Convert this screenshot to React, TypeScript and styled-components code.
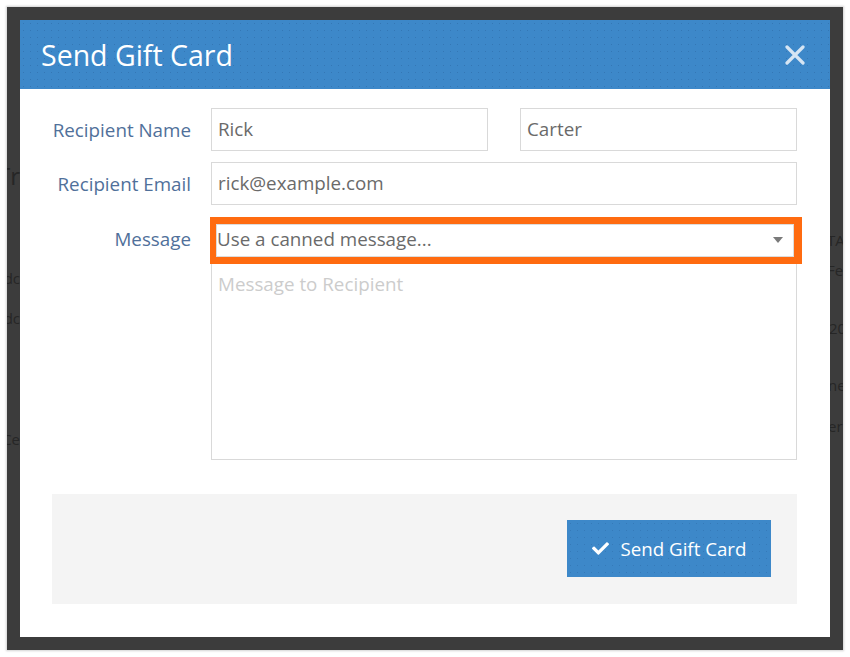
import React from "react";
import styled, { createGlobalStyle } from "styled-components";
import { FaCheck } from "react-icons/fa";

const Global = createGlobalStyle`
  html, body { margin: 0; padding: 0; background: #ffffff; }
  body { width: 850px; height: 657px; overflow: hidden; font-family: "Open Sans", "Liberation Sans", sans-serif; }
  * { box-sizing: border-box; }
`;

const Frame = styled.div`
  margin: 7px;
  width: 836px;
  height: 643px;
  background: #3c3c3c;
  box-shadow: 0 0 2px 1px rgba(0, 0, 0, 0.18);
  display: grid;
  grid-template-columns: 13px 810px 13px;
  grid-template-rows: 13px 617px 13px;
`;

const Gutter = styled.div<{ $col: number; $align: "left" | "right" }>`
  grid-column: ${(p) => p.$col};
  grid-row: 2;
  overflow: hidden;
  display: flex;
  flex-direction: column;
  align-items: ${(p) => (p.$align === "right" ? "flex-end" : "flex-start")};
  white-space: nowrap;
`;

const Ghost = styled.div<{ $mt: number; $size: number; $shift: number }>`
  margin-top: ${(p) => p.$mt}px;
  font-size: ${(p) => p.$size}px;
  line-height: ${(p) => p.$size + 2}px;
  color: #262626;
  margin-left: ${(p) => p.$shift}px;
  margin-right: ${(p) => -p.$shift}px;
`;

const Modal = styled.div`
  grid-column: 2;
  grid-row: 2;
  background: #ffffff;
  display: flex;
  flex-direction: column;
`;

const Header = styled.div`
  height: 69px;
  background-color: #3d88c9;
  background-image: radial-gradient(rgba(20, 60, 110, 0.22) 0.6px, transparent 0.9px);
  background-size: 7px 7px;
  display: flex;
  align-items: center;
  justify-content: space-between;
  padding: 0 24px 0 21px;
`;

const Title = styled.h1`
  margin: 0;
  font-size: 28.5px;
  font-weight: 400;
  color: #ffffff;
`;

const Close = styled.button`
  border: 0;
  background: transparent;
  padding: 0;
  width: 22px;
  height: 22px;
  display: flex;
  align-items: center;
  justify-content: center;
  cursor: pointer;
`;

const Body = styled.div`
  padding: 19px 33px 0 32px;
  display: flex;
  flex-direction: column;
`;

const Row = styled.div<{ $mb: number }>`
  display: grid;
  grid-template-columns: 139px 1fr;
  column-gap: 20px;
  margin-bottom: ${(p) => p.$mb}px;
`;

const Label = styled.label`
  text-align: right;
  font-size: 18.8px;
  color: #50709a;
  line-height: 43px;
  height: 43px;
  padding-top: 1px;
  white-space: nowrap;
`;

const Pair = styled.div`
  display: grid;
  grid-template-columns: 277px 277px;
  justify-content: space-between;
`;

const Input = styled.div`
  height: 43px;
  border: 1px solid #d9d9d9;
  padding: 0 6px;
  font-size: 18.8px;
  line-height: 41px;
  color: #6a6a6a;
`;

const Stack = styled.div`
  display: flex;
  flex-direction: column;
`;

const Select = styled.div`
  height: 47px;
  width: calc(100% + 6px);
  margin-left: -1px;
  border-style: solid;
  border-color: #ff6b10;
  border-width: 7px 8px 7px 6px;
  box-shadow: inset 0 0 0 1px #dcdcdc;
  display: flex;
  align-items: center;
  justify-content: space-between;
  padding: 0 11px 3px 1px;
  font-size: 18.8px;
  color: #6a6a6a;
`;

const Caret = styled.span`
  width: 0;
  height: 0;
  margin-top: 1px;
  border-left: 5px solid transparent;
  border-right: 5px solid transparent;
  border-top: 6px solid #7a7a7a;
`;

const TextArea = styled.div`
  height: 196px;
  border: 1px solid #d9d9d9;
  border-top: 0;
  padding: 7px 6px;
  font-size: 18.8px;
  color: #cccccc;
`;

const Footer = styled.div`
  margin-top: 34px;
  height: 110px;
  background: #f4f4f4;
  display: flex;
  justify-content: flex-end;
  align-items: flex-start;
  padding: 26px 26px 0 0;
`;

const Button = styled.button`
  width: 204px;
  height: 57px;
  border: 0;
  background-color: #3d88c9;
  background-image: radial-gradient(rgba(20, 60, 110, 0.18) 0.6px, transparent 0.9px);
  background-size: 7px 7px;
  color: #ffffff;
  font-family: "Open Sans", "Liberation Sans", sans-serif;
  font-size: 18.7px;
  display: flex;
  align-items: center;
  justify-content: center;
  gap: 12px;
  padding: 0;
  cursor: pointer;
`;

export default function App() {
  return (
    <>
      <Global />
      <Frame>
        <Gutter $col={1} $align="right">
          <Ghost $mt={143} $size={24} $shift={0}>Tr</Ghost>
          <Ghost $mt={81} $size={15} $shift={0}>dc</Ghost>
          <Ghost $mt={23} $size={15} $shift={0}>dc</Ghost>
          <Ghost $mt={104} $size={15} $shift={0}>Ce</Ghost>
        </Gutter>
        <Modal>
          <Header>
            <Title>Send Gift Card</Title>
            <Close aria-label="Close">
              <svg width="20" height="20" viewBox="0 0 20 20">
                <path d="M2 2 L18 18 M18 2 L2 18" stroke="#d6e5f3" strokeWidth="3.2" strokeLinecap="round" />
              </svg>
            </Close>
          </Header>
          <Body>
            <Row $mb={11}>
              <Label>Recipient Name</Label>
              <Pair>
                <Input>Rick</Input>
                <Input>Carter</Input>
              </Pair>
            </Row>
            <Row $mb={12}>
              <Label>Recipient Email</Label>
              <Input>rick@example.com</Input>
            </Row>
            <Row $mb={0}>
              <Label>Message</Label>
              <Stack>
                <Select>
                  <span>Use a canned message...</span>
                  <Caret />
                </Select>
                <TextArea>Message to Recipient</TextArea>
              </Stack>
            </Row>
            <Footer>
              <Button>
                <FaCheck size={17} />
                <span>Send Gift Card</span>
              </Button>
            </Footer>
          </Body>
        </Modal>
        <Gutter $col={3} $align="left">
          <Ghost $mt={212} $size={15} $shift={-3}>TA</Ghost>
          <Ghost $mt={13} $size={15} $shift={-3}>Fe</Ghost>
          <Ghost $mt={41} $size={15} $shift={-1}>20</Ghost>
          <Ghost $mt={40} $size={15} $shift={-2}>ne</Ghost>
          <Ghost $mt={24} $size={15} $shift={-2}>er</Ghost>
        </Gutter>
      </Frame>
    </>
  );
}
